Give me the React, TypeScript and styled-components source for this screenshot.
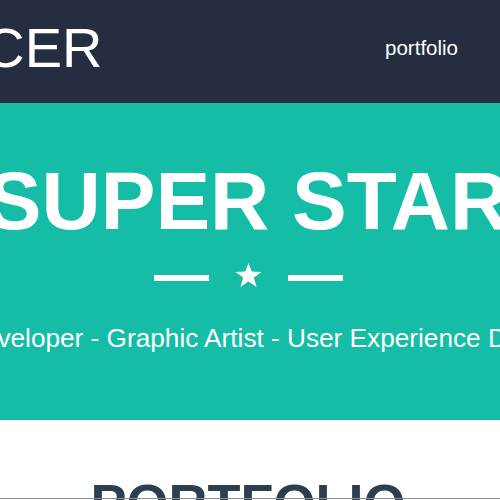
import React from "react";
import styled, { createGlobalStyle } from "styled-components";

const Global = createGlobalStyle`
  html, body {
    margin: 0;
    padding: 0;
    overflow: hidden;
    background: #ffffff;
    font-family: "Liberation Sans", Arial, sans-serif;
  }
`;

const Page = styled.div`
  width: 500px;
  overflow: hidden;
`;

const NavBar = styled.nav`
  height: 103px;
  box-sizing: border-box;
  background: #252d40;
  display: flex;
  align-items: flex-start;
  padding: 20px 42px 0 0;
`;

const Brand = styled.a`
  margin-left: -274px;
  font-size: 56px;
  line-height: 1;
  color: #ffffff;
  white-space: nowrap;
  text-decoration: none;
`;

const NavLink = styled.a`
  margin-left: auto;
  margin-top: 18px;
  font-size: 20.5px;
  line-height: 1;
  color: #ffffff;
  text-decoration: none;
`;

const Header = styled.header`
  background: #15bda6;
  display: flex;
  flex-direction: column;
  align-items: center;
  padding: 57px 4px 69px 0;
`;

const Title = styled.h1`
  margin: 0;
  font-size: 82px;
  font-weight: 700;
  line-height: 1;
  color: #ffffff;
  white-space: nowrap;
  text-transform: uppercase;
`;

const Divider = styled.div`
  margin-top: 21px;
  display: flex;
  align-items: flex-start;
  gap: 26px;
  height: 24px;
`;

const Line = styled.span`
  display: block;
  width: 55px;
  height: 6px;
  margin-top: 12px;
  background: #ffffff;
`;

const Skills = styled.p`
  margin: 38px 0 0;
  font-size: 26.2px;
  line-height: 1;
  color: #ffffff;
  white-space: nowrap;
`;

const Section = styled.section`
  display: flex;
  flex-direction: column;
  align-items: center;
  padding: 56px 4px 40px 0;
`;

const SectionTitle = styled.h2`
  margin: 0;
  font-size: 54px;
  font-weight: 700;
  line-height: 1;
  color: #2c3e50;
  white-space: nowrap;
`;

const EdgeLine = styled.div`
  position: fixed;
  left: 0;
  right: 0;
  top: 498px;
  height: 1px;
  background: #8a8f96;
`;

const Star = () => (
  <svg width="27" height="24" viewBox="0 0 27 24" aria-hidden="true">
    <polygon
      fill="#ffffff"
      points="13.5,0 16.7,8.6 26.5,9 18.8,14.6 21.6,24 13.5,18.6 5.4,24 8.2,14.6 0.5,9 10.3,8.6"
    />
  </svg>
);

export default function App() {
  return (
    <Page>
      <Global />
      <NavBar>
        <Brand href="#">FREELANCER</Brand>
        <NavLink href="#">portfolio</NavLink>
      </NavBar>
      <Header>
        <Title>Super Star</Title>
        <Divider>
          <Line />
          <Star />
          <Line />
        </Divider>
        <Skills>Web Developer - Graphic Artist - User Experience Designer</Skills>
      </Header>
      <Section>
        <SectionTitle>PORTFOLIO</SectionTitle>
      </Section>
      <EdgeLine />
    </Page>
  );
}
